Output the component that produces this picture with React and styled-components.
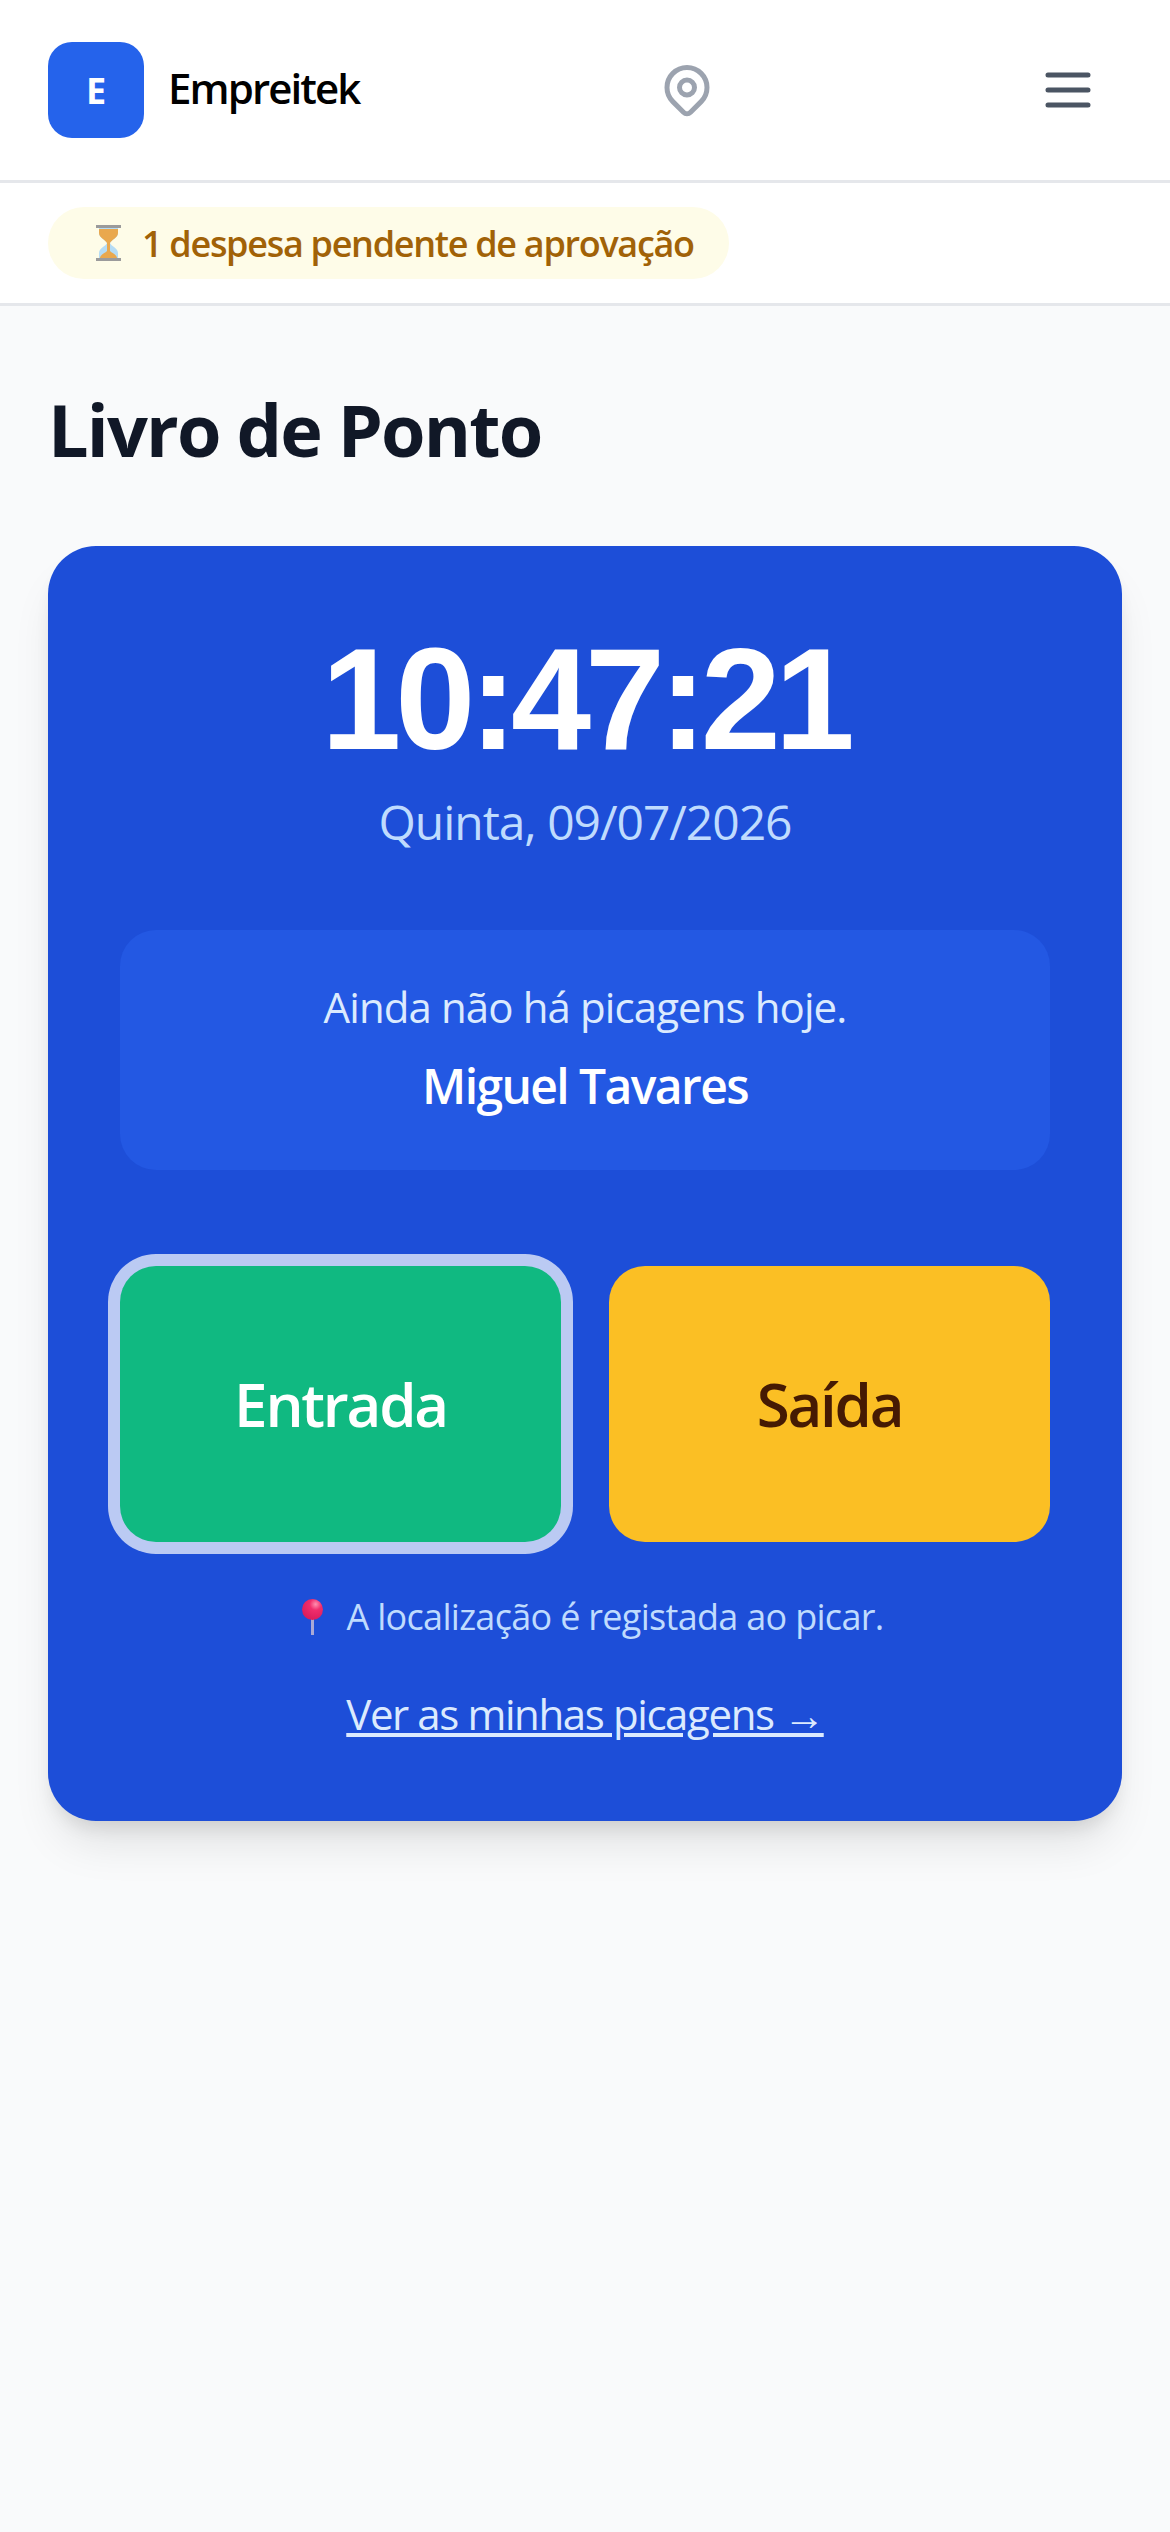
import React from 'react';
import styled, { createGlobalStyle } from 'styled-components';

const GlobalStyle = createGlobalStyle`
  * {
    box-sizing: border-box;
  }
  body {
    margin: 0;
    background: #f9fafb;
    font-family: "Open Sans", "Noto Sans", sans-serif;
  }
`;

const Page = styled.div`
  min-height: 100vh;
  background: #f9fafb;
`;

const Header = styled.header`
  display: flex;
  align-items: center;
  justify-content: space-between;
  height: 183px;
  padding: 0 48px;
  background: #fff;
  border-bottom: 3px solid #e5e7eb;
`;

const Brand = styled.div`
  display: flex;
  align-items: center;
  gap: 24px;
`;

const Logo = styled.div`
  display: flex;
  align-items: center;
  justify-content: center;
  width: 96px;
  height: 96px;
  border-radius: 24px;
  background: #2563eb;
  color: #fff;
  font-size: 36px;
  font-weight: 700;
`;

const BrandName = styled.span`
  padding-bottom: 5px;
  color: #000;
  font-size: 42px;
  font-weight: 600;
  letter-spacing: -1.9px;
`;

const IconButton = styled.button`
  display: flex;
  padding: 24px;
  border: 0;
  background: none;
  color: ${(p) => p.$color};
`;

const NoticeBar = styled.div`
  display: flex;
  height: 123px;
  padding: 24px 48px 0;
  background: #fff;
  border-bottom: 3px solid #e5e7eb;
`;

const Notice = styled.div`
  display: flex;
  align-items: center;
  gap: 21px;
  height: 72px;
  padding: 0 35px 0 48px;
  border-radius: 36px;
  background: #fefce8;
  color: #a16207;
  font-size: 36px;
  font-weight: 600;
  letter-spacing: -1.3px;
`;

const Main = styled.main`
  padding: 69px 48px;
`;

const Title = styled.h1`
  margin: 0 0 63px;
  color: #111827;
  font-size: 72px;
  line-height: 108px;
  font-weight: 700;
  letter-spacing: -1.85px;
`;

const Card = styled.section`
  display: flex;
  flex-direction: column;
  align-items: center;
  height: 1275px;
  padding: 72px;
  border-radius: 48px;
  background: #1d4ed8;
  box-shadow: 0 30px 45px -9px rgba(0, 0, 0, 0.1), 0 12px 18px -6px rgba(0, 0, 0, 0.1);
`;

const Clock = styled.div`
  color: #fff;
  font-family: "Liberation Sans", Arial, sans-serif;
  font-size: 144px;
  line-height: 164px;
  font-weight: 700;
  letter-spacing: -6.1px;
`;

const DateLine = styled.div`
  margin-top: 4px;
  color: #bfdbfe;
  font-size: 48px;
  line-height: 72px;
  letter-spacing: -1.05px;
`;

const StatusBox = styled.div`
  display: flex;
  flex-direction: column;
  align-items: center;
  width: 100%;
  height: 240px;
  margin-top: 72px;
  padding-top: 53px;
  border-radius: 36px;
  background: #2358e3;
`;

const StatusText = styled.div`
  color: #dbeafe;
  font-size: 42px;
  line-height: 48px;
  letter-spacing: -0.9px;
`;

const Employee = styled.div`
  margin-top: 25px;
  color: #fff;
  font-size: 48px;
  line-height: 60px;
  font-weight: 600;
  letter-spacing: -1.6px;
`;

const Actions = styled.div`
  display: grid;
  grid-template-columns: 1fr 1fr;
  gap: 48px;
  width: 100%;
  margin-top: 96px;
`;

const ActionButton = styled.button`
  height: 276px;
  border: 0;
  border-radius: 36px;
  background: ${(p) => p.$bg};
  color: ${(p) => p.$fg};
  font-family: inherit;
  font-size: 60px;
  font-weight: 600;
  letter-spacing: -2.2px;
  box-shadow: ${(p) => (p.$focused ? '0 0 0 12px rgba(255, 255, 255, 0.7)' : 'none')};
`;

const Hint = styled.div`
  display: flex;
  align-items: center;
  gap: 12px;
  margin-top: 51px;
  color: #bfdbfe;
  font-size: 36px;
  line-height: 48px;
  letter-spacing: -0.7px;
`;

const HistoryLink = styled.a`
  margin-top: 43px;
  color: #dbeafe;
  font-size: 42px;
  line-height: 60px;
  letter-spacing: -1.4px;
  text-decoration: underline;
`;

const PinIcon = () => (
  <svg width="60" height="60" viewBox="0 0 24 24" fill="none" stroke="currentColor" strokeWidth="2" strokeLinecap="round" strokeLinejoin="round">
    <path d="M17.657 16.657L13.414 20.9a2 2 0 01-2.827 0l-4.244-4.243a8 8 0 1111.314 0z" />
    <path d="M15 11a3 3 0 11-6 0 3 3 0 016 0z" />
  </svg>
);

const MenuIcon = () => (
  <svg width="60" height="60" viewBox="0 0 24 24" fill="none" stroke="currentColor" strokeWidth="2" strokeLinecap="round" strokeLinejoin="round">
    <path d="M4 6h16M4 12h16M4 18h16" />
  </svg>
);

const HourglassEmoji = () => (
  <svg width="25" height="36" viewBox="0 0 25 36">
    <path d="M3 2h19v6c0 5-7 7-8 10 1 3 8 5 8 10v6H3v-6c0-5 7-7 8-10-1-3-8-5-8-10z" fill="#b5dcf5" />
    <path d="M3 4h19v4c0 5-7 7-8 10v8c2 2 7 4 7 7H4c0-3 5-5 7-7v-8C10 15 3 13 3 8z" fill="#e9a84e" />
    <rect x="0" y="0" width="25" height="3" fill="#9b9b9b" />
    <rect x="0" y="33" width="25" height="3" fill="#9b9b9b" />
  </svg>
);

const PinEmoji = () => (
  <svg width="48" height="36" viewBox="0 0 48 36">
    <defs>
      <radialGradient id="pinHead" cx="0.65" cy="0.25" r="0.8">
        <stop offset="0" stopColor="#ff8fb0" />
        <stop offset="0.35" stopColor="#f02d6c" />
        <stop offset="1" stopColor="#d81b5a" />
      </radialGradient>
    </defs>
    <rect x="24" y="18" width="3" height="18" fill="#a9a9d6" />
    <circle cx="25.5" cy="10.5" r="10.5" fill="url(#pinHead)" />
  </svg>
);

const App = () => {
  return (
    <Page>
      <GlobalStyle />
      <Header>
        <Brand>
          <Logo>E</Logo>
          <BrandName>Empreitek</BrandName>
        </Brand>
        <IconButton $color="#9ca3af"><PinIcon /></IconButton>
        <IconButton $color="#4b5563"><MenuIcon /></IconButton>
      </Header>
      <NoticeBar>
        <Notice>
          <HourglassEmoji />
          1 despesa pendente de aprovação
        </Notice>
      </NoticeBar>
      <Main>
        <Title>Livro de Ponto</Title>
        <Card>
          <Clock>10:47:21</Clock>
          <DateLine>Quinta, 09/07/2026</DateLine>
          <StatusBox>
            <StatusText>Ainda não há picagens hoje.</StatusText>
            <Employee>Miguel Tavares</Employee>
          </StatusBox>
          <Actions>
            <ActionButton $bg="#10b981" $fg="#fff" $focused>Entrada</ActionButton>
            <ActionButton $bg="#fbbf24" $fg="#451a03">Saída</ActionButton>
          </Actions>
          <Hint>
            <PinEmoji />
            A localização é registada ao picar.
          </Hint>
          <HistoryLink href="#">Ver as minhas picagens →</HistoryLink>
        </Card>
      </Main>
    </Page>
  );
};

export default App;
